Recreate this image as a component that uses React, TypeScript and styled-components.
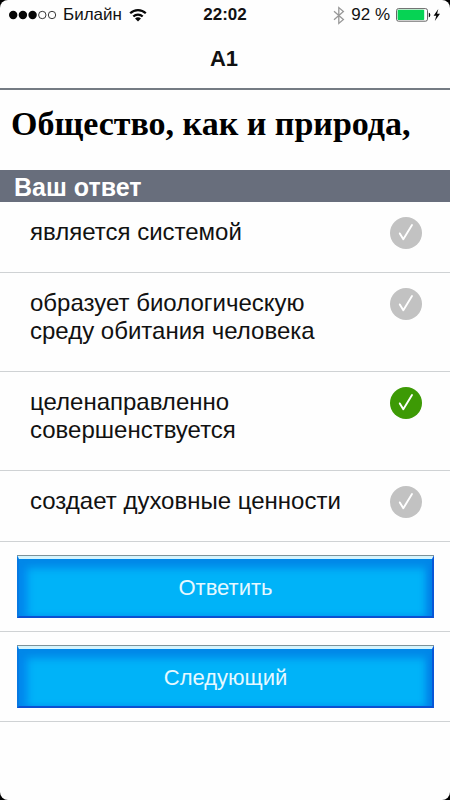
import React, { useState } from "react";
import styled, { createGlobalStyle } from "styled-components";

const GlobalStyle = createGlobalStyle`
  *, *::before, *::after { box-sizing: border-box; }
  body { margin: 0; background: #000; }
  body, button, input { font-family: "Liberation Sans", Arial, Helvetica, sans-serif; }
`;

const Screen = styled.div`
  display: flex;
  flex-direction: column;
  min-height: 100vh;
  background: #fefefe;
  color: #111;
  border-radius: 8px;
  overflow: hidden;
`;

const StatusBar = styled.div`
  display: grid;
  grid-template-columns: 1fr auto 1fr;
  align-items: center;
  height: 30px;
  padding: 0 9px;
  font-size: 17px;
  line-height: 20px;
`;

const StatusGroup = styled.div<{ $end?: boolean }>`
  display: flex;
  align-items: center;
  justify-content: ${(p) => (p.$end ? "flex-end" : "flex-start")};
  gap: 6px;
  white-space: nowrap;
`;

const Clock = styled.time`
  font-weight: 700;
`;

const NavBar = styled.header`
  display: flex;
  align-items: center;
  justify-content: center;
  height: 60px;
  border-bottom: 2px solid #747b83;
`;

const Title = styled.h1`
  margin: 0;
  padding-right: 2px;
  font-size: 22px;
  line-height: 28px;
  font-weight: 700;
`;

const Question = styled.h2`
  margin: 0;
  padding: 14px 11px 27px;
  font-family: "Liberation Serif", "Times New Roman", serif;
  font-size: 34px;
  line-height: 39px;
  font-weight: 700;
  color: #000;
`;

const SectionHeader = styled.h3`
  margin: 0;
  padding: 3px 14px 1px;
  background: #686e7c;
  color: #fff;
  font-size: 25px;
  line-height: 28px;
  font-weight: 700;
`;

const Answers = styled.div`
  display: flex;
  flex-direction: column;
`;

const AnswerRow = styled.label`
  display: flex;
  align-items: flex-start;
  justify-content: space-between;
  gap: 32px;
  padding: 15px 28px 26px 30px;
  border-bottom: 1px solid #cfd2d4;
  font-size: 24px;
  line-height: 28px;
  cursor: pointer;
`;

const AnswerText = styled.span`
  flex: 1;
  max-width: 330px;
  padding-top: 1px;
`;

const Mark = styled.span`
  display: grid;
  flex: none;
  width: 32px;
  height: 32px;
  margin-bottom: -4px;
  & > * { grid-area: 1 / 1; }
  & > svg { pointer-events: none; }
`;

const Radio = styled.input`
  appearance: none;
  width: 32px;
  height: 32px;
  margin: 0;
  border-radius: 50%;
  background: #c2c2c2;
  cursor: pointer;
  &:checked { background: #3d9a05; }
`;

const ActionCell = styled.div`
  padding: 13px 16px 13px 17px;
  border-bottom: 1px solid #cfd2d4;
`;

const ActionButton = styled.button`
  position: relative;
  display: block;
  width: 100%;
  height: 63px;
  padding: 0;
  border-style: solid;
  border-width: 4px 2px 2px;
  border-color: #d5f4fd #0757d8 #0b50d2 #0779e2;
  background: #00b3f8;
  box-shadow:
    inset 0 10px 8px -1px #0087e8,
    inset 11px 0 9px -3px #0087ee,
    inset -9px 0 8px -4px #0076e5;
  color: #e6f8ff;
  font-size: 22px;
  line-height: 26px;
  cursor: pointer;
  &::before {
    content: "";
    position: absolute;
    top: -4px;
    left: -2px;
    right: -2px;
    height: 1px;
    background: #7d9299;
  }
`;

const SignalIcon = () => (
  <svg width="48" height="12" viewBox="0 0 48 12" aria-hidden="true">
    {[4.2, 13.9, 23.6].map((x) => (
      <circle key={x} cx={x} cy="6" r="4.2" fill="#050505" />
    ))}
    {[33.3, 43].map((x) => (
      <circle key={x} cx={x} cy="6" r="3.7" fill="none" stroke="#222" strokeWidth="0.9" />
    ))}
  </svg>
);

const WifiIcon = () => (
  <svg width="20" height="14" viewBox="0 0 20 14" fill="none" stroke="#080808" strokeWidth="2.2" aria-hidden="true">
    <path d="M2.2 5.3a11 11 0 0 1 15.6 0" />
    <path d="M5.3 8.6a6.6 6.6 0 0 1 9.4 0" />
    <path d="M7 10.6a4.3 4.3 0 0 1 6 0L10 13.6z" fill="#080808" stroke="none" />
  </svg>
);

const BluetoothIcon = () => (
  <svg width="12" height="19" viewBox="0 0 12 19" fill="none" stroke="#999" strokeWidth="1.3" aria-hidden="true">
    <path d="M1 5.2 10.4 13.6 5.8 17.4V1.6L10.4 5.4 1 13.8" />
  </svg>
);

const BatteryIcon = () => (
  <svg width="45" height="14" viewBox="0 0 45 14" aria-hidden="true">
    <rect x="0.5" y="0.6" width="31" height="12.6" rx="2" fill="#fff" stroke="#555" strokeWidth="0.9" />
    <rect x="1.6" y="1.7" width="26.6" height="10.4" rx="0.8" fill="#06d354" />
    <path d="M32.8 4.7c2 .5 2 4.1 0 4.6z" fill="#111" />
    <path d="M42.3 1 37.6 7.7h2.7L38.8 13 44 5.8h-2.9z" fill="#080808" />
  </svg>
);

const CheckIcon = () => (
  <svg width="32" height="32" viewBox="0 0 32 32" fill="none" stroke="#fff" strokeWidth="1.9" strokeLinecap="round" strokeLinejoin="round" aria-hidden="true">
    <path d="M9.8 16.4 13.3 22.2 22 8" />
  </svg>
);

const answers = [
  "является системой",
  "образует биологическую среду обитания человека",
  "целенаправленно совершенствуется",
  "создает духовные ценности",
];

export default function App() {
  const [selected, setSelected] = useState(2);

  return (
    <>
      <GlobalStyle />
      <Screen>
        <StatusBar>
          <StatusGroup>
            <SignalIcon />
            <span>Билайн</span>
            <WifiIcon />
          </StatusGroup>
          <Clock>22:02</Clock>
          <StatusGroup $end>
            <BluetoothIcon />
            <span>92 %</span>
            <BatteryIcon />
          </StatusGroup>
        </StatusBar>
        <NavBar>
          <Title>A1</Title>
        </NavBar>
        <main>
          <Question>Общество, как и природа,</Question>
          <SectionHeader id="answers-title">Ваш ответ</SectionHeader>
          <Answers role="radiogroup" aria-labelledby="answers-title">
            {answers.map((answer, index) => (
              <AnswerRow key={answer}>
                <AnswerText>{answer}</AnswerText>
                <Mark>
                  <Radio
                    type="radio"
                    name="answer"
                    checked={selected === index}
                    onChange={() => setSelected(index)}
                  />
                  <CheckIcon />
                </Mark>
              </AnswerRow>
            ))}
          </Answers>
          <ActionCell>
            <ActionButton type="button">Ответить</ActionButton>
          </ActionCell>
          <ActionCell>
            <ActionButton type="button">Следующий</ActionButton>
          </ActionCell>
        </main>
      </Screen>
    </>
  );
}
